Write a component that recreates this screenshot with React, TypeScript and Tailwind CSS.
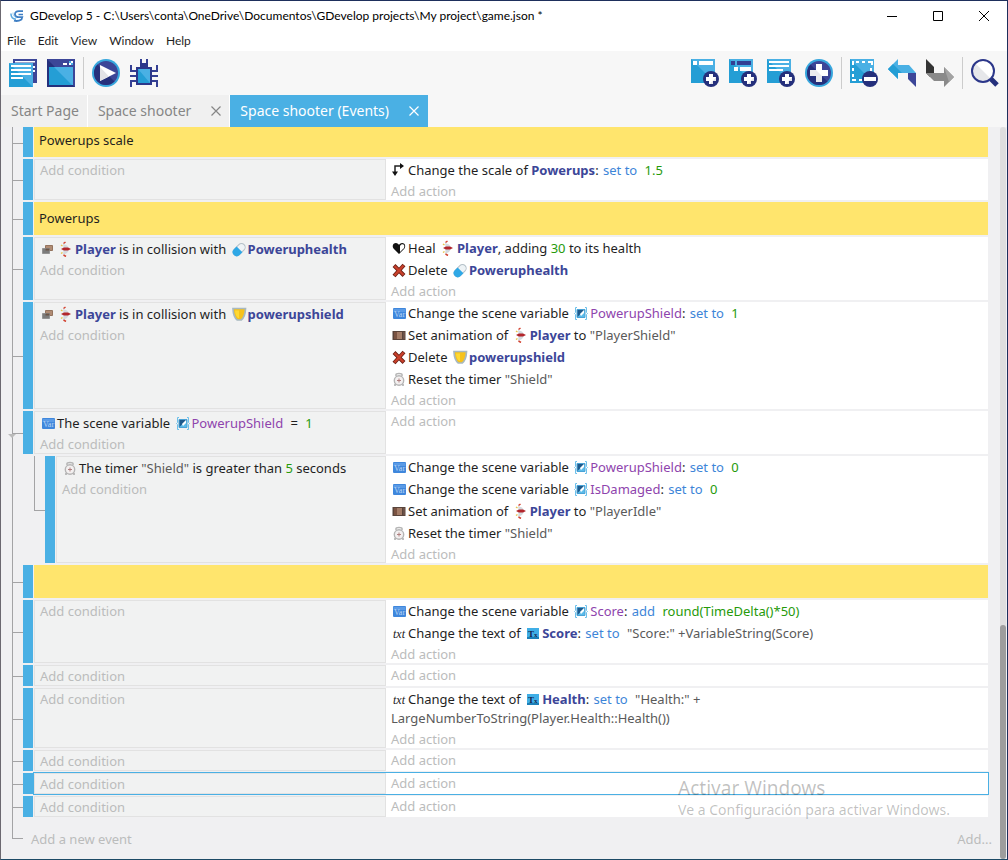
import type { ReactNode } from "react";
import clsx from "clsx";

/* ---------- toolbar icons ---------- */

function Svg28({ children }: { children: ReactNode }) {
  return (
    <svg viewBox="0 0 28 28" className="size-7" aria-hidden="true">
      {children}
    </svg>
  );
}

function PlusBadge() {
  return (
    <>
      <circle cx="20" cy="20" r="8" fill="#25307c" />
      <path d="M18 15h4v3h3v4h-3v3h-4v-3h-3v-4h3z" fill="#fff" />
      <path d="M25 18v4h-3v3h-3z" fill="#e4e5ea" />
    </>
  );
}

function ProjectIcon() {
  return (
    <Svg28>
      <path d="M4 0h24v24H4z" fill="#3c4698" />
      <path d="M6 2h20v1.500H6zM24 7h2v2h-2zM24 11h2v2h-2z" fill="#fff" />
      <path d="M0 4h24v24H0z" fill="#4ab0e4" />
      <path d="M0 4l24 24H0z" fill="#249ed5" />
      <path d="M2 6h20v2H2zM2 10h20v2H2zM2 14h20v2H2zM2 18h12v2H2z" fill="#fff" />
    </Svg28>
  );
}

function WindowIcon() {
  return (
    <Svg28>
      <path d="M0 0h28v28H0z" fill="#3c4698" />
      <path d="M0 0l28 28H0z" fill="#25307c" />
      <path d="M2 8h24v18H2z" fill="#4ab0e4" />
      <path d="M2 8h5l18 18H2z" fill="#249ed5" />
      <path d="M16 4h4v2h-4zM22 4h2v2h-2zM24 2h2v2h-2z" fill="#fff" />
      <path d="M22 2h2v2h-2zM24 4h2v2h-2z" fill="#4ab0e4" />
    </Svg28>
  );
}

function PlayIcon() {
  return (
    <Svg28>
      <circle cx="14" cy="14" r="14" fill="#37a7dd" />
      <circle cx="14" cy="14" r="12" fill="#3c4698" />
      <path d="M5.500 5.500a12 12 0 0 0 17 17z" fill="#25307c" />
      <path d="M8 6l16 8-16 8z" fill="#fff" />
      <path d="M8 8l9 9.500L8 22z" fill="#e3e3e6" />
    </Svg28>
  );
}

function BugIcon() {
  return (
    <Svg28>
      <g fill="none" stroke="#343f93" strokeWidth="2">
        <path d="M11 0v5h6V0M8 12H1V6M8 17H0M8 22H1v6M20 12h7V6M20 17h8M20 22h7v6" />
      </g>
      <path d="M10 4h8v4h-8zM6 8h16v18H6z" fill="#2c378a" />
      <path d="M8 10h12v14H8z" fill="#4ab0e4" />
      <path d="M8 10l12 14H8z" fill="#249ed5" />
    </Svg28>
  );
}

function AddEventIcon() {
  return (
    <Svg28>
      <path d="M0 0h24v24H0z" fill="#4ab0e4" />
      <path d="M0 0l24 24H0z" fill="#249ed5" />
      <path d="M2 2h4v4H2zM8 2h14v4H8z" fill="#fff" />
      <PlusBadge />
    </Svg28>
  );
}

function AddSubEventIcon() {
  return (
    <Svg28>
      <path d="M0 0h24v24H0z" fill="#4ab0e4" />
      <path d="M0 0l24 24H0z" fill="#249ed5" />
      <path d="M2 2h4v4H2zM8 2h14v4H8z" fill="#343f93" />
      <path d="M5 8h4v4H5zM11 8h11v4H11z" fill="#fff" />
      <PlusBadge />
    </Svg28>
  );
}

function AddCommentIcon() {
  return (
    <Svg28>
      <path d="M0 0h24v24H0z" fill="#4ab0e4" />
      <path d="M0 0l24 24H0z" fill="#249ed5" />
      <path d="M2 2h20v2H2zM2 6h20v2H2zM2 10h14v2H2z" fill="#fff" />
      <PlusBadge />
    </Svg28>
  );
}

function AddIcon() {
  return (
    <Svg28>
      <circle cx="14" cy="14" r="14" fill="#37a7dd" />
      <circle cx="14" cy="14" r="12" fill="#3c4698" />
      <path d="M5.500 5.500a12 12 0 0 0 17 17z" fill="#25307c" />
      <path d="M11 5h6v6h6v6h-6v6h-6v-6H5v-6h6z" fill="#fff" />
      <path d="M11 11l6 6v6h-6v-6H5v-6z" fill="#eaeaee" />
    </Svg28>
  );
}

function DeleteSelectionIcon() {
  return (
    <Svg28>
      <path d="M0 0h24v24H0z" fill="#4ab0e4" />
      <path d="M0 0l24 24H0z" fill="#249ed5" />
      <path
        d="M6 3h3M12 3h3M18 3h4v3M3 6V3h1M3 9v3M3 15v3M3 20v1h3M9 21h3M21 9v3"
        fill="none"
        stroke="#fff"
        strokeWidth="2"
      />
      <circle cx="20" cy="20" r="8" fill="#25307c" />
      <path d="M14 18h12v4H14z" fill="#fff" />
    </Svg28>
  );
}

function UndoIcon() {
  return (
    <Svg28>
      <path d="M0 10L10 0v6h11l7 8H10v6z" fill="#4ab0e4" />
      <path d="M0 10h6l4 4v6z" fill="#249ed5" />
      <path d="M5 5l9 9H4L0 10z" fill="#249ed5" />
      <path d="M20 14h8v14l-8-8z" fill="#3c4698" />
    </Svg28>
  );
}

function RedoIcon() {
  return (
    <Svg28>
      <path d="M0 0l8 8v6l-4 4-4-4z" fill="#343434" />
      <path d="M0 14h18V8l10 10-10 10v-6H8z" fill="#8a8a8a" />
      <path d="M18 8l10 10-5 5z" fill="#a3a3a3" />
    </Svg28>
  );
}

function SearchIcon() {
  return (
    <Svg28>
      <path d="M20 20l6 6" stroke="#25307c" strokeWidth="5" />
      <circle cx="12" cy="12" r="11" fill="#fff" />
      <path d="M4 4a11 11 0 0 0 16 16z" fill="#e6e7ea" />
      <circle cx="12" cy="12" r="11" fill="none" stroke="#2c378a" strokeWidth="2" />
    </Svg28>
  );
}

function Logo() {
  return (
    <svg viewBox="0 0 14 12" className="h-3 w-3.5" aria-hidden="true">
      <path d="M13 1.200H9C6 1.200 4.800 2.800 5 4.600 5.200 6.300 6.800 7.200 8.500 7.200H12.200L11.500 9.500C9 11 6 11.200 4 10.600" fill="none" stroke="#3f7fc4" strokeWidth="1.800" />
      <path d="M13 4.500H8.500" stroke="#3f7fc4" strokeWidth="1.500" />
      <path d="M1 3.500C.8 7 2.500 9 6 9.300" fill="none" stroke="#5aa8e0" strokeWidth="1.500" />
      <path d="M3 2.500C2.700 5 4 7 6.500 7.800" fill="none" stroke="#a5d2ef" />
    </svg>
  );
}

/* ---------- instruction icons ---------- */

function Svg16({ children }: { children: ReactNode }) {
  return (
    <svg viewBox="0 0 16 16" className="inline-block size-4 align-[-3px]" aria-hidden="true">
      {children}
    </svg>
  );
}

const scaleIcon = (
  <Svg16>
    <path d="M4 11V4h6" fill="none" stroke="#222" strokeWidth="1.500" />
    <path d="M9 1l4 3-4 3zM1 9.500h6L4 14z" fill="#111" />
  </Svg16>
);

const collisionIcon = (
  <Svg16>
    <path d="M5.500 4.500h7v5h-7z" fill="#b08c74" stroke="#94745f" />
    <path d="M2.500 7.500h7v5h-7z" fill="#7c7c7c" stroke="#939393" />
    <path d="M5.500 7.500h4v2h-4z" fill="#6b5446" />
  </Svg16>
);

const healthIcon = (
  <Svg16>
    <path d="M8 14L2.500 8.500C.8 6 2.200 3 4.800 3 6.500 3 7.500 4 8 5c.5-1 1.500-2 3.200-2C13.800 3 15.200 6 13.500 8.500z" fill="#111" />
    <path d="M9 12V6c1-2 2.400-2 3.500-1.500 1.200 1 1 2.500.2 3.800z" fill="#fff" />
  </Svg16>
);

const deleteIcon = (
  <Svg16>
    <path d="M3 3.500l10 10M13 3L3 14" stroke="#6b2016" strokeWidth="4" />
    <path d="M3.500 4l9 9M12.500 3.500l-9 10" stroke="#c9402b" strokeWidth="2.400" />
  </Svg16>
);

const varIcon = (
  <Svg16>
    <rect x="2" y="3" width="13" height="11" rx="1" fill="#3f87dc" />
    <path d="M2.500 4h12v3h-12z" fill="#5b9be6" />
    <text x="8.500" y="11.500" textAnchor="middle" fontSize="8" fontFamily="Liberation Serif, serif" fill="#b9d4f5">
      Var
    </text>
  </Svg16>
);

const animationIcon = (
  <Svg16>
    <path d="M1.500 4h13v9h-13z" fill="#59443b" />
    <path d="M3 5h3v7H3z" fill="#7a5342" />
    <path d="M6 5h5v7H6z" fill="#a37c67" />
    <path d="M12 5h2v7h-2z" fill="#6b5148" />
  </Svg16>
);

const timerIcon = (
  <Svg16>
    <path d="M5 5V3.500C5 2 11 2 11 3.500V5" fill="none" stroke="#b5b5b5" strokeWidth="1.500" />
    <circle cx="8" cy="9.500" r="4.700" fill="#f3f0f0" stroke="#b5b5b5" strokeWidth="1.400" />
    <path d="M8 7.500v4M6 9.500h4" stroke="#b08080" />
    <path d="M3 14h2M11 14h2" stroke="#aaa" strokeWidth="1.500" />
  </Svg16>
);

const textIcon = (
  <Svg16>
    <text x="8" y="12.500" textAnchor="middle" fontSize="12" fontStyle="italic" fontFamily="Liberation Serif, serif" fill="#222">
      txt
    </text>
  </Svg16>
);

const playerIcon = (
  <Svg16>
    <path d="M5 3l4 1.500L11.500 8 9 12l-4 2 .5-3.500L4 8l1.500-2z" fill="#d3d9de" />
    <path d="M3 8l3-1.500h4L13 8l-3 1.500H6z" fill="#b3262b" />
    <path d="M7.500 1L5.500 2.500M5.500 14L8 15.500" stroke="#d2412f" strokeWidth="1.500" />
    <path d="M3 4l1.500 1M3 12.500l1.500-1" stroke="#e6c44a" strokeWidth="1.500" />
  </Svg16>
);

const pillIcon = (
  <Svg16>
    <g transform="rotate(-45 8 8.500)">
      <rect x="1" y="5" width="14" height="7.400" rx="3.700" fill="#eef3f6" stroke="#b4c0c8" />
      <path d="M8.500 4.600H4.600a3.900 3.900 0 0 0 0 8.200h3.900z" fill="#2fa8e6" />
    </g>
  </Svg16>
);

const shieldIcon = (
  <Svg16>
    <path d="M2 2.500h12.500c-.2 5-1.500 9.500-4.300 11.500H6.300C3.500 12 2.200 7.500 2 2.500z" fill="#f6c21c" stroke="#a8b9c0" strokeWidth="1.700" />
    <path d="M4 4.500h4V12H7C5 10 4.200 7.500 4 4.500z" fill="#ffd932" />
  </Svg16>
);

const sceneVarIcon = (
  <Svg16>
    <path d="M4 2.500H2.500v5L1.500 8.500l1 1v5H4M12 2.500h1.500v5l1 1-1 1v5H12" fill="none" stroke="#6cc0ea" />
    <path d="M4 4.500h8v8H4z" fill="#5bbbea" stroke="#4aa3d6" />
    <path d="M4.500 5h7L4.500 12z" fill="#1f5a8c" />
    <path d="M7 9l4-4v3L8 11z" fill="#fff" />
  </Svg16>
);

const textObjectIcon = (
  <Svg16>
    <path d="M2 3h12v11H2z" fill="#3faee6" />
    <path d="M2 12h12v2H2z" fill="#1c7fb8" />
    <text x="3" y="11.500" fontSize="9" fontWeight="700" fontFamily="Liberation Serif, serif" fill="#16264f">
      T
    </text>
    <text x="9" y="12" fontSize="7" fontWeight="700" fontFamily="Liberation Serif, serif" fill="#16264f">
      x
    </text>
  </Svg16>
);

/* ---------- instruction parts ---------- */

function Obj({ icon, children }: { icon?: ReactNode; children: ReactNode }) {
  return (
    <span className="font-bold text-[#3c4698]">
      {icon && <span className="mx-px">{icon}</span>}
      {children}
    </span>
  );
}

function Variable({ children }: { children: ReactNode }) {
  return (
    <span className="text-[#8e44ad]">
      <span className="mx-px">{sceneVarIcon}</span>
      {children}
    </span>
  );
}

function Op({ children }: { children: ReactNode }) {
  return <span className="text-[#3d85d8]">{children}</span>;
}

function Num({ children }: { children: ReactNode }) {
  return <span className="text-[#269a0a]">{children}</span>;
}

function Str({ children }: { children: ReactNode }) {
  return <span className="text-[#5a5a5a]">{children}</span>;
}

/* Operator followed by its operand, set apart a little wider than a word space */
function Assign({ op, children }: { op: string; children: ReactNode }) {
  return (
    <>
      <span className="mr-1 ml-px">
        <Op>{op}</Op>
      </span>{" "}
      {children}
    </>
  );
}

function Instruction({ icon, children }: { icon: ReactNode; children: ReactNode }) {
  return (
    <p className="whitespace-nowrap pt-0.5 pb-px leading-[19px]">
      <span className="mr-px">{icon}</span>
      {children}
    </p>
  );
}

function AddButton({ children }: { children: ReactNode }) {
  return (
    <button type="button" className="block pt-0.5 leading-[17px] text-[#bbbcbc] hover:underline">
      {children}
    </button>
  );
}

/* ---------- event tree ---------- */

function Row({ child, fold, children }: { child?: boolean; fold?: boolean; children: ReactNode }) {
  return (
    <li className="flex pl-[11px]">
      <div className="relative flex w-[11px] shrink-0 items-center border-l border-[#a3a3a5]">
        {!child && <div className="h-px w-full bg-[#a3a3a5]" />}
        {fold && (
          <svg viewBox="0 0 8 4" className="absolute top-[23px] -left-[5px] h-1 w-2">
            <path d="M0 0h8L4 4z" fill="#bbb" />
          </svg>
        )}
      </div>
      {child && (
        <div className="ml-[11px] w-[11px] shrink-0">
          <div className="h-1/2 border-b border-l border-[#a3a3a5]" />
        </div>
      )}
      <div className="mb-0.5 flex min-w-0 flex-1">
        <div className="mr-px w-2.5 shrink-0 bg-[#4ab0e4]" />
        {children}
      </div>
    </li>
  );
}

function CommentRow({ first, children }: { first?: boolean; children?: ReactNode }) {
  return (
    <Row>
      <div
        className={clsx(
          "flex-1 bg-[#ffe56d] px-[5px]",
          first ? "h-[30px] pt-1" : "h-[33px] pt-[7px]",
        )}>
        <p className="leading-[19px]">{children}</p>
      </div>
    </Row>
  );
}

interface EventRowProps {
  conditions?: ReactNode;
  actions?: ReactNode;
  child?: boolean;
  fold?: boolean;
  selected?: boolean;
}

function EventRow({ conditions, actions, child, fold, selected }: EventRowProps) {
  return (
    <Row child={child} fold={fold}>
      <div className={clsx("flex min-w-0 flex-1", selected && "outline outline-[#4ab0e4]")}>
        <div
          className={clsx(
            "shrink-0 border border-[#e2e2e2] bg-[#f1f2f2] pl-[5px]",
            child ? "w-[330px]" : "w-[352px]",
          )}>
          {conditions}
          <AddButton>Add condition</AddButton>
        </div>
        <div className="min-w-0 flex-1 bg-white pl-[5px]">
          {actions}
          <AddButton>Add action</AddButton>
        </div>
      </div>
    </Row>
  );
}

function EventsSheet() {
  return (
    <ul className="flex-1">
      <CommentRow first>Powerups scale</CommentRow>
      <EventRow
        actions={
          <Instruction icon={scaleIcon}>
            Change the scale of <Obj>Powerups</Obj>: <Assign op="set to"><Num>1.5</Num></Assign>
          </Instruction>
        }
      />
      <CommentRow>Powerups</CommentRow>
      <EventRow
        conditions={
          <Instruction icon={collisionIcon}>
            <Obj icon={playerIcon}>Player</Obj> is in collision with <Obj icon={pillIcon}>Poweruphealth</Obj>
          </Instruction>
        }
        actions={
          <>
            <Instruction icon={healthIcon}>
              Heal <Obj icon={playerIcon}>Player</Obj>, adding <Num>30</Num> to its health
            </Instruction>
            <Instruction icon={deleteIcon}>
              Delete <Obj icon={pillIcon}>Poweruphealth</Obj>
            </Instruction>
          </>
        }
      />
      <EventRow
        conditions={
          <Instruction icon={collisionIcon}>
            <Obj icon={playerIcon}>Player</Obj> is in collision with <Obj icon={shieldIcon}>powerupshield</Obj>
          </Instruction>
        }
        actions={
          <>
            <Instruction icon={varIcon}>
              Change the scene variable <Variable>PowerupShield</Variable>: <Assign op="set to"><Num>1</Num></Assign>
            </Instruction>
            <Instruction icon={animationIcon}>
              Set animation of <Obj icon={playerIcon}>Player</Obj> to <Str>"PlayerShield"</Str>
            </Instruction>
            <Instruction icon={deleteIcon}>
              Delete <Obj icon={shieldIcon}>powerupshield</Obj>
            </Instruction>
            <Instruction icon={timerIcon}>
              Reset the timer <Str>"Shield"</Str>
            </Instruction>
          </>
        }
      />
      <EventRow
        fold
        conditions={
          <Instruction icon={varIcon}>
            The scene variable <Variable>PowerupShield</Variable> <span className="mx-1">=</span> <Num>1</Num>
          </Instruction>
        }
      />
      <EventRow
        child
        conditions={
          <Instruction icon={timerIcon}>
            The timer <Str>"Shield"</Str> is greater than <Num>5</Num> seconds
          </Instruction>
        }
        actions={
          <>
            <Instruction icon={varIcon}>
              Change the scene variable <Variable>PowerupShield</Variable>: <Assign op="set to"><Num>0</Num></Assign>
            </Instruction>
            <Instruction icon={varIcon}>
              Change the scene variable <Variable>IsDamaged</Variable>: <Assign op="set to"><Num>0</Num></Assign>
            </Instruction>
            <Instruction icon={animationIcon}>
              Set animation of <Obj icon={playerIcon}>Player</Obj> to <Str>"PlayerIdle"</Str>
            </Instruction>
            <Instruction icon={timerIcon}>
              Reset the timer <Str>"Shield"</Str>
            </Instruction>
          </>
        }
      />
      <CommentRow />
      <EventRow
        actions={
          <>
            <Instruction icon={varIcon}>
              Change the scene variable <Variable>Score</Variable>:{" "}
              <Assign op="add"><Num>round(TimeDelta()*50)</Num></Assign>
            </Instruction>
            <Instruction icon={textIcon}>
              Change the text of <Obj icon={textObjectIcon}>Score</Obj>:{" "}
              <Assign op="set to"><Str>"Score:" +VariableString(Score)</Str></Assign>
            </Instruction>
          </>
        }
      />
      <EventRow />
      <EventRow
        actions={
          <Instruction icon={textIcon}>
            Change the text of <Obj icon={textObjectIcon}>Health</Obj>:{" "}
            <Assign op="set to">
              <Str>
                "Health:" +
                <br />
                LargeNumberToString(Player.Health::Health())
              </Str>
            </Assign>
          </Instruction>
        }
      />
      <EventRow />
      <EventRow selected />
      <EventRow />
      <li className="flex h-10 items-center pl-[11px] text-[#bbbcbc]">
        <div className="h-full w-[11px]">
          <div className="h-1/2 border-b border-l border-[#a3a3a5]" />
        </div>
        <button type="button" className="ml-2 pt-0.5 hover:underline">
          Add a new event
        </button>
        <button type="button" className="-mr-1 ml-auto pt-0.5 hover:underline">
          Add...
        </button>
      </li>
    </ul>
  );
}

/* ---------- window chrome ---------- */

function TitleBar() {
  return (
    <header className="flex h-[29px] items-center bg-white pl-[9px] font-['Lato',sans-serif] text-xs text-black">
      <Logo />
      <h1 className="ml-1.5 flex-1">
        GDevelop 5 - C:\Users\conta\OneDrive\Documentos\GDevelop projects\My project\game.json *
      </h1>
      <div className="flex">
        <button type="button" aria-label="Minimize" className="flex w-[46px] justify-center">
          <svg viewBox="0 0 10 10" className="size-2.5">
            <path d="M0 5.500h10" stroke="#000" />
          </svg>
        </button>
        <button type="button" aria-label="Maximize" className="flex w-[46px] justify-center">
          <svg viewBox="0 0 10 10" className="size-2.5">
            <path d="M.5.5h9v9h-9z" fill="none" stroke="#000" />
          </svg>
        </button>
        <button type="button" aria-label="Close" className="flex w-[46px] justify-center">
          <svg viewBox="0 0 10 10" className="size-2.5">
            <path d="M0 0l10 10M10 0L0 10" stroke="#000" />
          </svg>
        </button>
      </div>
    </header>
  );
}

function ToolButton({ label, children }: { label: string; children: ReactNode }) {
  return (
    <button type="button" aria-label={label} className="size-7">
      {children}
    </button>
  );
}

function Separator() {
  return <div className="mx-2 h-8 w-px bg-[#ccc]" />;
}

function Toolbar() {
  return (
    <div className="flex h-11 items-center bg-[#f7f7f7] px-2">
      <div className="flex gap-2.5">
        <ToolButton label="Project manager"><ProjectIcon /></ToolButton>
        <ToolButton label="Preview window"><WindowIcon /></ToolButton>
      </div>
      <Separator />
      <div className="flex flex-1 gap-2.5">
        <ToolButton label="Preview"><PlayIcon /></ToolButton>
        <ToolButton label="Debugger"><BugIcon /></ToolButton>
      </div>
      <div className="flex gap-2.5">
        <ToolButton label="Add event"><AddEventIcon /></ToolButton>
        <ToolButton label="Add sub-event"><AddSubEventIcon /></ToolButton>
        <ToolButton label="Add comment"><AddCommentIcon /></ToolButton>
        <ToolButton label="Add other event"><AddIcon /></ToolButton>
      </div>
      <Separator />
      <div className="flex gap-2.5">
        <ToolButton label="Delete selection"><DeleteSelectionIcon /></ToolButton>
        <ToolButton label="Undo"><UndoIcon /></ToolButton>
        <ToolButton label="Redo"><RedoIcon /></ToolButton>
      </div>
      <Separator />
      <ToolButton label="Search"><SearchIcon /></ToolButton>
    </div>
  );
}

function Tab({ title, closable, active }: { title: string; closable?: boolean; active?: boolean }) {
  return (
    <div
      className={clsx(
        "flex items-center border-r pr-2 pl-2.5",
        active ? "border-[#4ab0e4] bg-[#4ab0e4] text-white" : "border-white bg-[#f0f0f0] text-[#868686]",
      )}>
      <button type="button">{title}</button>
      {closable && (
        <button type="button" aria-label={`Close ${title}`} className="ml-5">
          <svg viewBox="0 0 10 10" className="size-2.5">
            <path d="M.5.5l9 9M9.500.5l-9 9" stroke="currentColor" strokeWidth="1.200" />
          </svg>
        </button>
      )}
    </div>
  );
}

function App() {
  return (
    <div className="relative flex min-h-screen flex-col border border-t-[#1e2f5c] border-r-[#1e2f5c] border-b-[#1d4a66] border-l-[#6b6870] bg-[#f0f0f2] font-['Noto_Sans',sans-serif] text-[13px] text-[#1f1f1f]">
      <TitleBar />
      <nav className="flex h-[21px] items-center gap-3 bg-white pl-1.5 font-['Lato',sans-serif] text-xs">
        <button type="button">File</button>
        <button type="button">Edit</button>
        <button type="button">View</button>
        <button type="button">Window</button>
        <button type="button">Help</button>
      </nav>
      <Toolbar />
      <div className="flex h-8 bg-[#f7f7f7] text-sm">
        <Tab title="Start Page" />
        <Tab title="Space shooter" closable />
        <Tab title="Space shooter (Events)" closable active />
      </div>
      <main className="flex flex-1">
        <EventsSheet />
        <div className="ml-3 flex w-1.5 flex-col rounded-full bg-[#dedede]">
          <div className="flex-[68]" />
          <div className="flex-[32] rounded-full bg-[#9d9d9d]" />
        </div>
        <div className="w-px" />
      </main>

      <div className="pointer-events-none absolute right-[57px] bottom-[39px] text-[#00000040]">
        <p className="text-[19px] leading-6">Activar Windows</p>
        <p className="text-sm leading-5">Ve a Configuración para activar Windows.</p>
      </div>
    </div>
  );
}

export default App;
